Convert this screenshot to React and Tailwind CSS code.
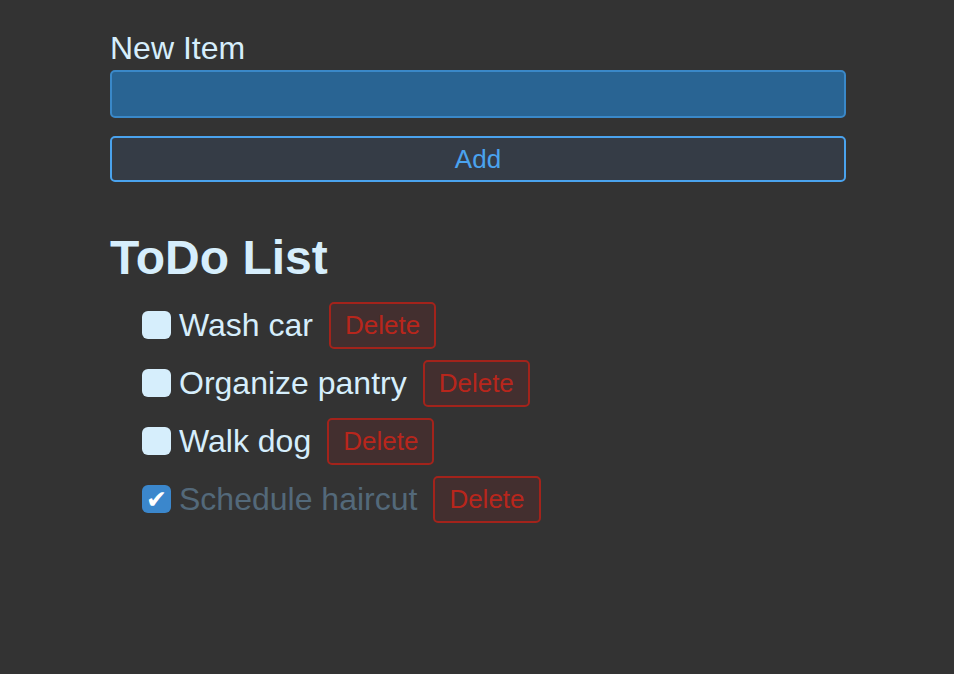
import React, { useState } from 'react';

const initialTodos = [
  { id: 1, text: 'Wash car', done: false },
  { id: 2, text: 'Organize pantry', done: false },
  { id: 3, text: 'Walk dog', done: false },
  { id: 4, text: 'Schedule haircut', done: true },
];

function App() {
  const [todos, setTodos] = useState(initialTodos);
  const [value, setValue] = useState('');

  const addTodo = () => {
    if (!value.trim()) return;
    setTodos([...todos, { id: Date.now(), text: value.trim(), done: false }]);
    setValue('');
  };

  const toggle = (id) =>
    setTodos(todos.map((t) => (t.id === id ? { ...t, done: !t.done } : t)));

  const remove = (id) => setTodos(todos.filter((t) => t.id !== id));

  return (
    <div
      className="min-h-screen bg-[#333333] text-[#d6eefc]"
      style={{ fontFamily: '"Liberation Sans", Arial, sans-serif' }}
    >
      <div className="w-[736px] ml-[110px] pt-[30px]">
        {/* ===== NEW ITEM ===== */}
        <label className="block text-[32px] leading-[36px]">New Item</label>
        <input
          value={value}
          onChange={(e) => setValue(e.target.value)}
          className="mt-1 block w-full h-12 rounded-[5px] border-2 border-[#3a88c8] bg-[#296493] px-3 text-[26px] text-[#d6eefc] outline-none"
        />
        <button
          onClick={addTodo}
          className="mt-[18px] block w-full h-[46px] rounded-[5px] border-2 border-[#4aa3ee] bg-[#353c46] text-[26px] text-[#4aa3ee]"
        >
          Add
        </button>

        {/* ===== LIST ===== */}
        <h1 className="mt-[52px] text-[48px] leading-[48px] font-bold">ToDo List</h1>

        <ul className="mt-5 pl-8 flex flex-col gap-3">
          {todos.map((todo) => (
            <li key={todo.id} className="flex items-center h-[46px]">
              <button
                onClick={() => toggle(todo.id)}
                className={`w-[29px] h-[28px] rounded-[6px] flex items-center justify-center ${
                  todo.done ? 'bg-[#3b87cc]' : 'bg-[#d6eefc]'
                }`}
              >
                {todo.done && (
                  <span
                    className="text-white text-[25px] leading-none"
                    style={{ fontFamily: '"DejaVu Sans", sans-serif' }}
                  >
                    ✔
                  </span>
                )}
              </button>
              <span
                className={`ml-2 text-[32px] leading-[36px] ${
                  todo.done ? 'text-[#53697a]' : 'text-[#d6eefc]'
                }`}
              >
                {todo.text}
              </span>
              <button
                onClick={() => remove(todo.id)}
                className="ml-4 h-[47px] px-[14px] rounded-[5px] border-2 border-[#a3231b] bg-[#432f2f] text-[26px] text-[#b8261c]"
              >
                Delete
              </button>
            </li>
          ))}
        </ul>
      </div>
    </div>
  );
}

export default App;
